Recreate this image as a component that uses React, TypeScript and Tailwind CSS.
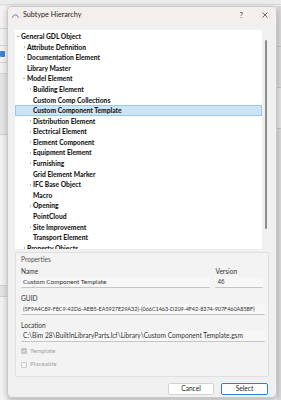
import React from "react";

type Row = { label: string; level: number; chevron?: "open" | "closed"; selected?: boolean };

const rows: Row[] = [
  { label: "General GDL Object", level: 0, chevron: "open" },
  { label: "Attribute Definition", level: 1, chevron: "closed" },
  { label: "Documentation Element", level: 1, chevron: "closed" },
  { label: "Library Master", level: 1 },
  { label: "Model Element", level: 1, chevron: "open" },
  { label: "Building Element", level: 2, chevron: "closed" },
  { label: "Custom Comp Collections", level: 2 },
  { label: "Custom Component Template", level: 2, selected: true },
  { label: "Distribution Element", level: 2, chevron: "closed" },
  { label: "Electrical Element", level: 2, chevron: "closed" },
  { label: "Element Component", level: 2, chevron: "closed" },
  { label: "Equipment Element", level: 2, chevron: "closed" },
  { label: "Furnishing", level: 2, chevron: "closed" },
  { label: "Grid Element Marker", level: 2 },
  { label: "IFC Base Object", level: 2, chevron: "closed" },
  { label: "Macro", level: 2 },
  { label: "Opening", level: 2, chevron: "closed" },
  { label: "PointCloud", level: 2 },
  { label: "Site Improvement", level: 2, chevron: "closed" },
  { label: "Transport Element", level: 2 },
  { label: "Property Objects", level: 1, chevron: "closed" },
];

const font = { fontFamily: 'Lato, "Noto Sans", sans-serif' };

function Chevron({ kind }: { kind: "open" | "closed" }) {
  return kind === "open" ? (
    <svg width="4" height="3" viewBox="0 0 4 3" className="block">
      <path d="M0.8 0.8 L2 2 L3.2 0.8" fill="none" stroke="#808080" strokeWidth="0.6" />
    </svg>
  ) : (
    <svg width="3" height="4" viewBox="0 0 3 4" className="block">
      <path d="M0.8 0.8 L2 2 L0.8 3.2" fill="none" stroke="#8c8c8c" strokeWidth="0.6" />
    </svg>
  );
}

function TreeRow({ row }: { row: Row }) {
  const pad = row.level === 0 ? "pl-[0px]" : row.level === 1 ? "pl-[6px]" : "pl-[12px]";
  return (
    <div
      className={`h-[10.6px] flex items-center ${pad} ${
        row.selected ? "bg-[#cce4f7] outline outline-1 outline-[#99c9ef] -outline-offset-1" : ""
      }`}
    >
      <div className="w-[6px] flex items-center justify-center shrink-0">
        {row.chevron ? <Chevron kind={row.chevron} /> : null}
      </div>
      <span className="text-[6.7px] font-black text-[#1a1a1a] leading-none whitespace-nowrap">{row.label}</span>
    </div>
  );
}

function Field({ value, size, className = "" }: { value: string; size: string; className?: string }) {
  return (
    <div
      className={`h-[11px] bg-[#f7f7f7] border-b border-[#c4c4c4] rounded-[1px] flex items-center pl-[2px] lining-nums text-[#333] whitespace-nowrap overflow-hidden ${size} ${className}`}
    >
      {value}
    </div>
  );
}

export default function App() {
  return (
    <div className="w-[281px] h-[400px] relative overflow-hidden bg-[#ececec]" style={font}>
      {/* background application */}
      <div className="absolute left-0 top-[4px] w-[281px] h-px bg-[#dcdcdc]" />
      <div className="absolute left-0 top-[6px] w-[7px] h-[394px] bg-[#f3f3f3] flex flex-col">
        <div className="h-[22px]" />
        <div className="h-px bg-[#d6d6d6]" />
        <div className="h-[16px]" />
        <div className="h-px bg-[#d6d6d6]" />
        <div className="h-[5px]" />
        <div className="h-[6px] w-[5px] bg-[#3b82d6] rounded-[1px]" />
        <div className="h-[5px]" />
        <div className="h-px bg-[#d6d6d6]" />
        <div className="h-[10px]" />
        <div className="h-px bg-[#d6d6d6]" />
        <div className="h-[60px] bg-[#e6e6e6]" />
        <div className="h-px bg-[#d0d0d0]" />
        <div className="h-[150px]" />
        <div className="h-px bg-[#d0d0d0]" />
        <div className="h-[10px] bg-[#e4e4e4]" />
        <div className="h-px bg-[#d0d0d0]" />
      </div>
      <div className="absolute left-[277px] top-[6px] w-[4px] h-[394px] bg-[#d9d9d9] flex flex-col">
        <div className="h-[40px]" />
        <div className="h-px bg-[#c4c4c4]" />
        <div className="h-[40px]" />
        <div className="h-px bg-[#c4c4c4]" />
        <div className="h-[40px] bg-[#e4e4e4]" />
        <div className="h-px bg-[#c4c4c4]" />
      </div>

      {/* dialog window */}
      <div className="absolute left-[7px] top-[6px] w-[270px] h-[392px] rounded-[5px] border border-[#c9c9c9] bg-[#f0f0f0] shadow-[0_2px_6px_rgba(0,0,0,0.25)] overflow-hidden flex flex-col">
        {/* title bar */}
        <div className="h-[16px] bg-[#f4efed] flex items-center pl-[4px] pr-[6px] shrink-0">
          <svg width="7" height="5" viewBox="0 0 7 5" className="block">
            <path d="M0.6 4.6 C1.2 1 5.8 1 6.4 4.6" fill="none" stroke="#2a72c8" strokeWidth="0.9" />
          </svg>
          <span className="ml-[4px] text-[7.2px] text-[#222]">Subtype Hierarchy</span>
          <span className="ml-auto text-[7px] text-[#333]">?</span>
          <svg width="6" height="6" viewBox="0 0 6 6" className="block ml-[19px] mr-[2px]">
            <path d="M0.5 0.5 L5.5 5.5 M5.5 0.5 L0.5 5.5" stroke="#333" strokeWidth="0.7" />
          </svg>
        </div>

        <div className="flex-1 flex flex-col px-[7px] pt-[7px]">
          {/* tree */}
          <div className="h-[219px] flex shrink-0">
            <div className="w-[247px] bg-white overflow-hidden pt-[1px]">
              {rows.map((r) => (
                <TreeRow key={r.label} row={r} />
              ))}
            </div>
            <div className="flex-1 flex justify-center pt-[10px]">
              <div className="w-[2px] h-[189px] bg-[#8c8c8c] rounded-full" />
            </div>
          </div>

          {/* properties */}
          <div className="mt-[3px] h-[125px] border border-[#e0e0e0] rounded-[2px] bg-[#f3f3f3] flex flex-col px-[5px] pt-[1px] shrink-0">
            <div className="text-[6.6px] text-[#555] leading-[10px]">Properties</div>
            <div className="flex gap-[5px] mt-[3px]">
              <div className="w-[191px] flex flex-col">
                <div className="text-[6.6px] text-[#333] leading-[8px]">Name</div>
                <Field value="Custom Component Template" size="text-[6.4px]" className="mt-[2px]" />
              </div>
              <div className="w-[48px] flex flex-col">
                <div className="text-[6.6px] text-[#333] leading-[8px]">Version</div>
                <Field value="46" size="text-[6.2px] font-['Open_Sans']" className="mt-[2px]" />
              </div>
            </div>
            <div className="text-[6.6px] text-[#333] leading-[8px] mt-[6px]">GUID</div>
            <Field
              value="{5F9A4C89-F8C9-42D6-AEB5-EA5927E29A32}-{066C1463-D209-4F42-8374-907F460A85BF}"
              size="text-[5.5px] tracking-[-0.05px]"
              className="mt-[2px] w-[244px]"
            />
            <div className="text-[6.6px] text-[#333] leading-[8px] mt-[6px]">Location</div>
            <Field
              value="C:\Bim 28\BuiltInLibraryParts.lcf\Library\Custom Component Template.gsm"
              size="text-[6.6px]"
              className="mt-[2px] w-[244px]"
            />
            <div className="flex items-center gap-[3px] mt-[6px]">
              <div className="w-[6px] h-[6px] rounded-[1px] bg-[#c6c6c6] flex items-center justify-center">
                <svg width="4" height="4" viewBox="0 0 4 4" className="block">
                  <path d="M0.6 2 L1.6 3 L3.4 1" fill="none" stroke="#fff" strokeWidth="0.6" />
                </svg>
              </div>
              <span className="text-[6.4px] text-[#a3a3a3] leading-none">Template</span>
            </div>
            <div className="flex items-center gap-[3px] mt-[7px]">
              <div className="w-[6px] h-[6px] rounded-[1px] border border-[#c8c8c8] bg-[#f6f6f6]" />
              <span className="text-[6.4px] text-[#a3a3a3] leading-none">Placeable</span>
            </div>
          </div>

          {/* buttons */}
          <div className="flex justify-end gap-[7px] mt-[6px] pr-[1px]">
            <div className="w-[46px] h-[12px] bg-white border border-[#d3d3d3] rounded-[2px] flex items-center justify-center text-[6.6px] text-[#222]">
              Cancel
            </div>
            <div className="w-[47px] h-[12px] bg-white border border-[#2f7fd0] rounded-[2px] flex items-center justify-center text-[6.6px] text-[#222]">
              Select
            </div>
          </div>
        </div>
      </div>
    </div>
  );
}
